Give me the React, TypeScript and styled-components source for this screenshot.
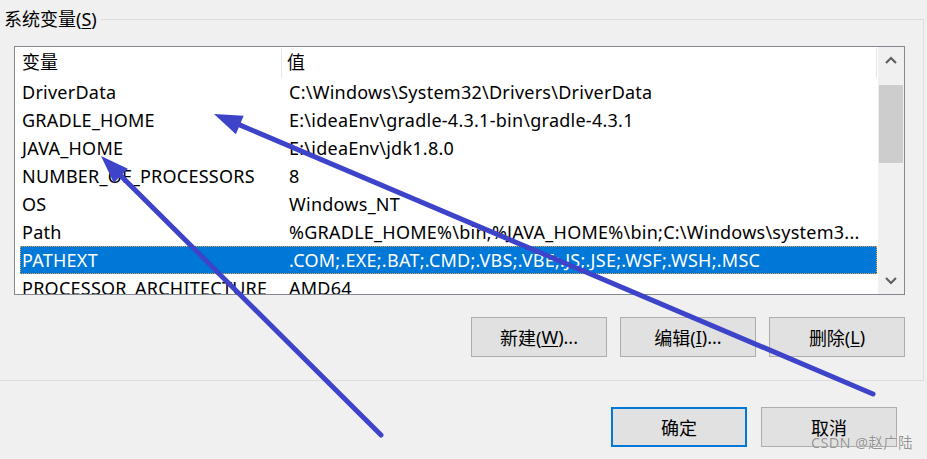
import React from "react";
import styled, { createGlobalStyle } from "styled-components";

const Global = createGlobalStyle`
  html, body { margin: 0; padding: 0; background: #f0f0f0; }
  body { font-family: "Noto Sans", "Noto Sans CJK SC", sans-serif; }
`;

const Page = styled.div`
  position: relative;
  width: 927px;
  height: 459px;
  overflow: hidden;
  background: #f0f0f0;
  font-family: "Noto Sans", "Noto Sans CJK SC", sans-serif;
  font-size: 18px;
  color: #000;
  padding-top: 19px;
  box-sizing: border-box;
`;

const Group = styled.div`
  box-sizing: border-box;
  width: 924px;
  height: 362px;
  border: 1px solid #dcdcdc;
  border-left: none;
  display: flex;
  flex-direction: column;
`;

const Legend = styled.div`
  align-self: flex-start;
  margin-top: -12px;
  padding: 0 4px;
  height: 22px;
  line-height: 22px;
  background: #f0f0f0;
  white-space: nowrap;
`;

const U = styled.span`
  text-decoration: underline;
  text-underline-offset: 2px;
  text-decoration-thickness: 1px;
`;

const ListBox = styled.div`
  box-sizing: border-box;
  margin: 16px 0 0 14px;
  width: 891px;
  height: 249px;
  border: 1px solid #828790;
  background: #fff;
  display: flex;
`;

const Table = styled.div`
  flex: 1;
  display: flex;
  flex-direction: column;
  overflow: hidden;
`;

const Header = styled.div`
  display: grid;
  grid-template-columns: 267px 595px;
  height: 31px;
  line-height: 31px;
  flex-shrink: 0;
`;

const HeadCell = styled.div<{ $pad: number }>`
  padding-left: ${(p) => p.$pad}px;
  border-right: 1px solid #e5e5e5;
  margin: 1px 0 0;
  line-height: 29px;
`;

const Rows = styled.div`
  flex: 1;
  overflow: hidden;
  padding-left: 5px;
`;

const Row = styled.div<{ $sel?: boolean }>`
  box-sizing: border-box;
  width: 857px;
  height: 28px;
  line-height: 26px;
  display: grid;
  grid-template-columns: 268px 1fr;
  white-space: nowrap;
  letter-spacing: 0.25px;
  background: ${(p) => (p.$sel ? "#0078d7" : "transparent")};
  color: ${(p) => (p.$sel ? "#fff" : "#000")};
  border: 1px ${(p) => (p.$sel ? "dotted #e8a050" : "solid transparent")};
`;

const Cell = styled.div<{ $pad: number }>`
  padding-left: ${(p) => p.$pad}px;
  overflow: hidden;
`;

const Scrollbar = styled.div`
  width: 26px;
  background: #f0f0f0;
  display: flex;
  flex-direction: column;
  align-items: center;
`;

const ArrowBtn = styled.div`
  height: 26px;
  width: 100%;
  display: flex;
  align-items: center;
  justify-content: center;
  flex-shrink: 0;
`;

const Track = styled.div`
  flex: 1;
  width: 24px;
  padding-top: 12px;
`;

const Thumb = styled.div`
  height: 78px;
  background: #cdcdcd;
`;

const ButtonRow = styled.div<{ $gap: number; $right: number; $top: number }>`
  display: flex;
  justify-content: flex-end;
  gap: ${(p) => p.$gap}px;
  margin-top: ${(p) => p.$top}px;
  margin-right: ${(p) => p.$right}px;
`;

const Button = styled.div<{ $primary?: boolean }>`
  box-sizing: border-box;
  width: 136px;
  height: 40px;
  display: flex;
  align-items: center;
  justify-content: center;
  background: #e1e1e1;
  border: ${(p) => (p.$primary ? "2px solid #0078d7" : "1px solid #adadad")};
  font-size: 18px;
  white-space: nowrap;
`;

const Watermark = styled.div`
  position: absolute;
  left: 811px;
  top: 431px;
  font-size: 14.5px;
  color: rgba(120, 120, 120, 0.8);
  text-shadow: 0 0 1px #fff;
  white-space: nowrap;
  letter-spacing: 0.3px;
`;

const Overlay = styled.svg`
  position: absolute;
  left: 0;
  top: 0;
  pointer-events: none;
`;

const rows: [string, string][] = [
  ["DriverData", "C:\\Windows\\System32\\Drivers\\DriverData"],
  ["GRADLE_HOME", "E:\\ideaEnv\\gradle-4.3.1-bin\\gradle-4.3.1"],
  ["JAVA_HOME", "E:\\ideaEnv\\jdk1.8.0"],
  ["NUMBER_OF_PROCESSORS", "8"],
  ["OS", "Windows_NT"],
  ["Path", "%GRADLE_HOME%\\bin;%JAVA_HOME%\\bin;C:\\Windows\\system3..."],
  ["PATHEXT", ".COM;.EXE;.BAT;.CMD;.VBS;.VBE;.JS;.JSE;.WSF;.WSH;.MSC"],
  ["PROCESSOR_ARCHITECTURE", "AMD64"],
];

function Arrow({ x1, y1, x2, y2 }: { x1: number; y1: number; x2: number; y2: number }) {
  const dx = x2 - x1;
  const dy = y2 - y1;
  const len = Math.hypot(dx, dy);
  const ux = dx / len;
  const uy = dy / len;
  const nx = -uy;
  const ny = ux;
  const hl = 28;
  const hw = 10;
  const bx = x2 - ux * hl;
  const by = y2 - uy * hl;
  const color = "#3d44c9";
  return (
    <g>
      <line
        x1={x1}
        y1={y1}
        x2={bx + ux * 4}
        y2={by + uy * 4}
        stroke={color}
        strokeWidth={5}
        strokeLinecap="round"
      />
      <polygon
        points={`${x2},${y2} ${bx + nx * hw},${by + ny * hw} ${bx - nx * hw},${by - ny * hw}`}
        fill={color}
      />
    </g>
  );
}

export default function App() {
  return (
    <Page>
      <Global />
      <Group>
        <Legend>
          系统变量(<U>S</U>)
        </Legend>
        <ListBox>
          <Table>
            <Header>
              <HeadCell $pad={7}>变量</HeadCell>
              <HeadCell $pad={5}>值</HeadCell>
            </Header>
            <Rows>
              {rows.map(([k, v]) => (
                <Row key={k} $sel={k === "PATHEXT"}>
                  <Cell $pad={1}>{k}</Cell>
                  <Cell $pad={0}>{v}</Cell>
                </Row>
              ))}
            </Rows>
          </Table>
          <Scrollbar>
            <ArrowBtn>
              <svg width="12" height="8" viewBox="0 0 12 8">
                <path d="M1 7 L6 2 L11 7" fill="none" stroke="#606060" strokeWidth="2.2" />
              </svg>
            </ArrowBtn>
            <Track>
              <Thumb />
            </Track>
            <ArrowBtn>
              <svg width="12" height="8" viewBox="0 0 12 8">
                <path d="M1 1 L6 6 L11 1" fill="none" stroke="#606060" strokeWidth="2.2" />
              </svg>
            </ArrowBtn>
          </Scrollbar>
        </ListBox>
        <ButtonRow $gap={13} $right={18} $top={22}>
          <Button>
            新建(<U>W</U>)...
          </Button>
          <Button>
            编辑(<U>I</U>)...
          </Button>
          <Button>
            删除(<U>L</U>)
          </Button>
        </ButtonRow>
      </Group>
      <ButtonRow $gap={14} $right={30} $top={26}>
        <Button $primary>确定</Button>
        <Button>取消</Button>
      </ButtonRow>
      <Watermark>CSDN @赵广陆</Watermark>
      <Overlay width="927" height="459" viewBox="0 0 927 459">
        <Arrow x1={873} y1={394} x2={214} y2={114} />
        <Arrow x1={381} y1={435} x2={101} y2={156} />
      </Overlay>
    </Page>
  );
}
